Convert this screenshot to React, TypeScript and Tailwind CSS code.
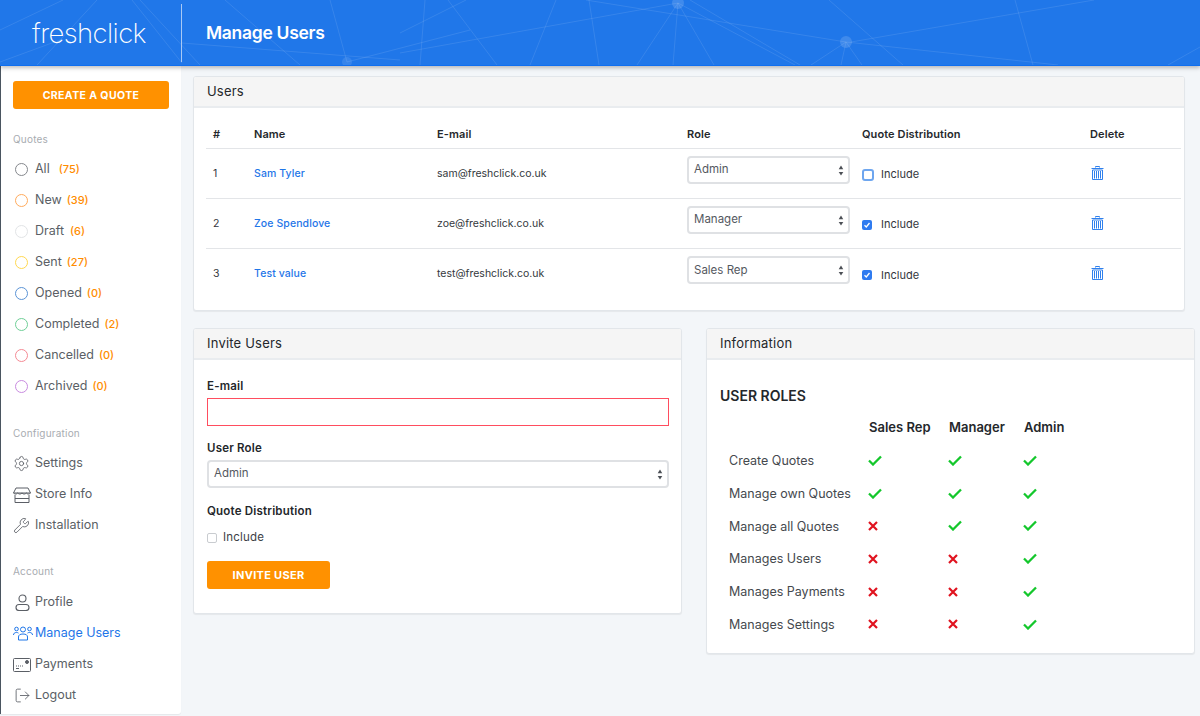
import React from "react";
import { Settings, Wrench, LogOut } from "lucide-react";

const quoteRows = [
  { label: "All", count: "(75)", ring: "border-[#85888d]", gap: "ml-[9px]" },
  { label: "New", count: "(39)", ring: "border-[#ffab5c]", gap: "ml-[5px]" },
  { label: "Draft", count: "(6)", ring: "border-[#e2e4e6]", gap: "ml-[6px]" },
  { label: "Sent", count: "(27)", ring: "border-[#ffd84f]", gap: "ml-[5px]" },
  { label: "Opened", count: "(0)", ring: "border-[#5b94d6]", gap: "ml-[5px]" },
  { label: "Completed", count: "(2)", ring: "border-[#6fcf97]", gap: "ml-[5px]" },
  { label: "Cancelled", count: "(0)", ring: "border-[#f58a94]", gap: "ml-[5px]" },
  { label: "Archived", count: "(0)", ring: "border-[#c98be0]", gap: "ml-[5px]" },
];

const users = [
  { id: 1, name: "Sam Tyler", email: "sam@freshclick.co.uk", role: "Admin", include: false },
  { id: 2, name: "Zoe Spendlove", email: "zoe@freshclick.co.uk", role: "Manager", include: true },
  { id: 3, name: "Test value", email: "test@freshclick.co.uk", role: "Sales Rep", include: true },
];

const permissions: [string, boolean, boolean, boolean][] = [
  ["Create Quotes", true, true, true],
  ["Manage own Quotes", true, true, true],
  ["Manage all Quotes", false, true, true],
  ["Manages Users", false, false, true],
  ["Manages Payments", false, false, true],
  ["Manages Settings", false, false, true],
];

const headerLines = [
  "M0 30L63 0", "M97 0L37 65", "M132 0L182 63", "M140 0L200 65", "M182 43L400 60", "M225 0L300 65",
  "M0 62L60 40", "M330 0L347 62", "M347 62L470 30", "M586 0L846 42L1058 65", "M851 42L1094 0",
  "M400 53L678 3", "M678 3L637 65", "M678 3L673 65", "M678 3L714 65", "M678 3L795 65", "M690 0L800 65",
  "M846 42L811 65", "M846 42L841 65", "M846 42L862 65", "M829 0L903 65", "M1015 0L1033 65",
  "M556 0L530 65", "M589 0L599 65", "M448 0L497 65", "M425 0L420 65", "M466 0L400 33", "M1200 47L1168 65",
];

const HeaderLines = () => (
  <svg className="absolute inset-0 h-full w-full" viewBox="0 0 1200 65" preserveAspectRatio="none">
    {headerLines.map((d) => (
      <path key={d} d={d} fill="none" stroke="#ffffff" strokeOpacity="0.1" strokeWidth="1" />
    ))}
    <circle cx="846" cy="42" r="6" fill="#ffffff" fillOpacity="0.14" />
    <circle cx="678" cy="3" r="6" fill="#ffffff" fillOpacity="0.14" />
    <circle cx="347" cy="62" r="5" fill="#ffffff" fillOpacity="0.1" />
  </svg>
);

const StoreIcon = () => (
  <svg viewBox="0 0 18 16" className="h-[16px] w-[18px]" fill="none" stroke="#5b5f66" strokeWidth="1">
    <path d="M3 1h12l2.500 5H.5z" />
    <path d="M.5 6c1.500 1.400 3 1.400 4.200 0 1.300 1.400 3 1.400 4.300 0 1.300 1.400 3 1.400 4.300 0 1.200 1.400 2.700 1.400 4.200 0" />
    <path d="M2 8v7.500h14V8M2 11.500h14" />
  </svg>
);

const ProfileIcon = () => (
  <svg viewBox="0 0 15 17" className="h-[17px] w-[15px]" fill="none" stroke="#5b5f66" strokeWidth="1.100">
    <circle cx="7.500" cy="4.500" r="3.500" />
    <rect x="1" y="10.500" width="13" height="6" rx="3" />
  </svg>
);

const UsersIcon = () => (
  <svg viewBox="0 0 20 15" className="h-[15px] w-[20px]" fill="none" stroke="#1f76e8" strokeWidth="1">
    <circle cx="10" cy="3.500" r="2.500" />
    <circle cx="3.500" cy="3" r="1.800" />
    <circle cx="16.500" cy="3" r="1.800" />
    <path d="M5.500 14v-3c0-2 1.500-3 4.500-3s4.500 1 4.500 3v3z" />
    <path d="M.5 9c0-1.500 1-2.500 3-2.500 1 0 1.500.2 2 .6M19.500 9c0-1.500-1-2.500-3-2.500-1 0-1.500.2-2 .6" />
  </svg>
);

const PaymentsIcon = () => (
  <svg viewBox="0 0 18 14" className="h-[14px] w-[18px]" fill="none" stroke="#5b5f66" strokeWidth="1">
    <rect x="0.500" y="0.500" width="17" height="13" rx="1" />
    <path d="M3 8h1M5 8h1M7 8h1M9 8h1M3 10.500h3" strokeWidth="1.200" />
    <circle cx="14" cy="4" r="1.500" fill="#5b5f66" />
  </svg>
);

const Arrows = () => (
  <svg viewBox="0 0 6 12" className="h-[11px] w-[6px]" fill="#4b4f55">
    <path d="M3 0.500L5.500 4.500H0.500z" />
    <path d="M3 11.500L0.500 7.500H5.500z" />
  </svg>
);

const Trash = () => (
  <svg viewBox="0 0 13 14" className="h-[14px] w-[13px]" fill="none" stroke="#2f80ed" strokeWidth="1">
    <path d="M4.500 1.500V.5h4v1M.5 2.500h12M1.500 2.500h10" />
    <path d="M1.500 4h10v9.500h-10z" />
    <path d="M3.500 5v7.500M5.500 5v7.500M7.500 5v7.500M9.500 5v7.500" />
  </svg>
);

const Check = () => (
  <svg viewBox="0 0 14 11" className="-ml-[1px] h-[11px] w-[14px]" fill="none" stroke="#14c72c" strokeWidth="2.300">
    <path d="M1 5.500L5 9.500L13 1.500" />
  </svg>
);

const Cross = () => (
  <svg viewBox="0 0 10 10" className="-ml-[1px] h-[10px] w-[10px]" fill="none" stroke="#e0131f" strokeWidth="2.200">
    <path d="M1 1L9 9M9 1L1 9" />
  </svg>
);

const SectionLabel = ({ children }: { children: React.ReactNode }) => (
  <div className="h-[16px] pl-[12px] text-[10px] leading-[16px] tracking-[0.2px] text-[#a8acb1]">{children}</div>
);

const NavRow = ({ icon, label, active }: { icon: React.ReactNode; label: string; active?: boolean }) => (
  <div className={`flex h-[31px] items-center pl-[12px] text-[12.500px] ${active ? "text-[#1f76e8]" : "text-[#5b5f66]"}`}>
    <span className="flex w-[22px] shrink-0 items-center justify-start">{icon}</span>
    {label}
  </div>
);

const Card = ({ title, className, children }: { title: string; className: string; children: React.ReactNode }) => (
  <div className={`overflow-hidden rounded-[3px] border border-[#e2e6ea] bg-white shadow-[0_1px_1px_rgba(0,0,0,0.06)] ${className}`}>
    <div className="flex h-[31px] items-center border-b-2 border-[#e9ecef] bg-[#f5f5f5] px-[13px] pt-[1px] text-[13px] tracking-[0.2px] text-[#24272b]">
      {title}
    </div>
    {children}
  </div>
);

const SelectBox = ({ value, className }: { value: string; className: string }) => (
  <div className={`flex h-[28px] items-center justify-between rounded-[4px] border-2 border-[#dfe1e4] bg-white pl-[5px] pr-[4px] text-[11.500px] text-[#55595f] ${className}`}>
    {value}
    <Arrows />
  </div>
);

const CheckBox = ({ on, first }: { on: boolean; first?: boolean }) => {
  if (first) return <span className="h-[12px] w-[12px] rounded-[3px] border-2 border-[#6ea6ef] bg-white" />;
  if (!on) return <span className="h-[10px] w-[10px] rounded-[2px] border border-[#c9ccd0] bg-white" />;
  return (
    <span className="flex h-[10px] w-[10px] items-center justify-center rounded-[2px] bg-[#2f7bf0]">
      <svg viewBox="0 0 8 8" className="h-[8px] w-[8px]" fill="none" stroke="#ffffff" strokeWidth="1.300">
        <path d="M1.500 4.200L3.300 6L6.500 2" />
      </svg>
    </span>
  );
};

export default function App() {
  return (
    <div className="flex h-[716px] w-[1200px] flex-col overflow-hidden bg-[#f3f6f9] font-['Inter',sans-serif]">
      <header className="relative z-10 flex h-[66px] shrink-0 items-center overflow-hidden border-b border-[#0f6ff0] bg-[#2077e9] shadow-[0_2px_4px_rgba(0,0,0,0.25)]">
        <HeaderLines />
        <div className="relative w-[181px] pl-[32px] pt-[2px] text-[27.500px] font-extralight tracking-[-0.6px] text-white">freshclick</div>
        <div className="relative h-[58px] w-px bg-[#a8c9f5]" />
        <div className="relative ml-[24px] pt-[1px] text-[17.500px] font-semibold tracking-[-0.3px] text-white">Manage Users</div>
      </header>

      <div className="flex min-h-0 flex-1">
        <aside className="mb-[2px] w-[181px] shrink-0 rounded-br-[3px] border-l border-[#4a5560] bg-white shadow-[0_1px_1px_rgba(0,0,0,0.06)]">
          <div className="px-[12px] pt-[15px]">
            <div className="flex h-[28px] w-[156px] items-center justify-center rounded-[3px] bg-[#ff9100] pt-[1px] text-[10.500px] font-bold tracking-[0.4px] text-white">
              CREATE A QUOTE
            </div>
          </div>
          <div className="mt-[22px]" />
          <SectionLabel>Quotes</SectionLabel>
          <div className="mt-[7px]">
            {quoteRows.map((q) => (
              <div key={q.label} className="flex h-[31px] items-center pl-[14px] text-[12.500px] text-[#5b5f66]">
                <span className={`mr-[7px] h-[13px] w-[13px] rounded-full border-[1.500px] ${q.ring}`} />
                {q.label}
                <span className={`${q.gap} text-[11px] font-medium text-[#ff8c00]`}>{q.count}</span>
              </div>
            ))}
          </div>
          <div className="mt-[23px]" />
          <SectionLabel>Configuration</SectionLabel>
          <div className="mt-[7px]">
            <NavRow icon={<Settings size={17} strokeWidth={1.2} color="#5b5f66" />} label="Settings" />
            <NavRow icon={<StoreIcon />} label="Store Info" />
            <NavRow icon={<Wrench size={17} strokeWidth={1.2} color="#5b5f66" />} label="Installation" />
          </div>
          <div className="mt-[22px]" />
          <SectionLabel>Account</SectionLabel>
          <div className="mt-[8px]">
            <NavRow icon={<span className="ml-[2px] flex"><ProfileIcon /></span>} label="Profile" />
            <NavRow icon={<UsersIcon />} label="Manage Users" active />
            <NavRow icon={<PaymentsIcon />} label="Payments" />
            <NavRow icon={<LogOut size={17} strokeWidth={1.2} color="#5b5f66" className="ml-[1px]" />} label="Logout" />
          </div>
        </aside>

        <main className="w-[1007px] pl-[12px] pr-[3px] pt-[10px]">
          <Card title="Users" className="h-[235px]">
            <div className="px-[12px] pt-[17px]">
              <table className="w-[975px] table-fixed border-collapse text-[10.500px] text-[#33373c]">
                <thead>
                  <tr className="h-[23px] border-b border-[#e3e5e8] text-left text-[11px] font-semibold tracking-[0.1px] text-[#25282c]">
                    <th className="w-[41px] pb-[4px] pl-[7px] font-semibold">#</th>
                    <th className="w-[183px] pb-[4px] pl-[7px] font-semibold">Name</th>
                    <th className="w-[250px] pb-[4px] pl-[7px] font-semibold">E-mail</th>
                    <th className="w-[175px] pb-[4px] pl-[7px] font-semibold">Role</th>
                    <th className="w-[228px] pb-[4px] pl-[7px] font-semibold">Quote Distribution</th>
                    <th className="pb-[4px] pl-[7px] font-semibold">Delete</th>
                  </tr>
                </thead>
                <tbody>
                  {users.map((u) => (
                    <tr key={u.id} className="h-[50px] border-b border-[#e3e5e8] last:border-b-0">
                      <td className="pl-[7px] pt-[2px]">{u.id}</td>
                      <td className="pl-[7px] pt-[2px] font-medium tracking-[0.1px] text-[#1f76e8]">{u.name}</td>
                      <td className="pl-[7px] pt-[2px]">{u.email}</td>
                      <td className="pl-[7px]">
                        <div className="pb-[6px]">
                          <SelectBox value={u.role} className="w-[163px]" />
                        </div>
                      </td>
                      <td className="pl-[7px] pt-[3px] text-[11px]">
                        <div className="flex items-center">
                          <span className="flex w-[19px] items-center">
                            <CheckBox on={u.include} first={u.id === 1} />
                          </span>
                          Include
                        </div>
                      </td>
                      <td className="pl-[7px]">
                        <div className="pl-[1px]">
                          <Trash />
                        </div>
                      </td>
                    </tr>
                  ))}
                </tbody>
              </table>
            </div>
          </Card>

          <div className="mt-[17px] grid grid-cols-[489px_489px] items-start gap-[24px]">
            <Card title="Invite Users" className="h-[286px]">
              <div className="px-[13px] pt-[19px] text-[#24272b]">
                <div className="text-[11.500px] font-semibold leading-[14px] tracking-[0.2px]">E-mail</div>
                <input className="mt-[5px] block h-[28px] w-[462px] border border-[#ff4d5f] bg-white outline-none" />
                <div className="mt-[15px] text-[11.500px] font-semibold leading-[14px] tracking-[0.2px]">User Role</div>
                <SelectBox value="Admin" className="mt-[5px] w-[462px]" />
                <div className="mt-[16px] text-[11.500px] font-semibold leading-[14px] tracking-[0.2px]">Quote Distribution</div>
                <div className="mt-[11px] flex items-center text-[11.500px] tracking-[0.2px] text-[#3d4146]">
                  <span className="flex w-[16px] items-center">
                    <CheckBox on={false} />
                  </span>
                  Include
                </div>
                <div className="mt-[15px] flex h-[28px] w-[123px] items-center justify-center rounded-[3px] bg-[#ff9100] text-[11px] font-bold tracking-[0.3px] text-white">
                  INVITE USER
                </div>
              </div>
            </Card>

            <Card title="Information" className="h-[326px]">
              <div className="px-[13px] pt-[27px]">
                <div className="text-[14px] font-semibold leading-[17px] text-[#24272b]">USER ROLES</div>
                <div className="mt-[15px] grid grid-cols-[140px_80px_75px_1fr] pl-[9px] text-[13px] font-semibold leading-[17px] text-[#24272b]">
                  <div />
                  <div>Sales Rep</div>
                  <div>Manager</div>
                  <div>Admin</div>
                </div>
                <div className="mt-[8px] pl-[9px]">
                  {permissions.map(([label, a, b, c]) => (
                    <div key={label} className="grid h-[32.800px] grid-cols-[140px_80px_75px_1fr] items-center text-[12.500px] text-[#45494e]">
                      <div className="pt-[2px]">{label}</div>
                      <div>{a ? <Check /> : <Cross />}</div>
                      <div>{b ? <Check /> : <Cross />}</div>
                      <div>{c ? <Check /> : <Cross />}</div>
                    </div>
                  ))}
                </div>
              </div>
            </Card>
          </div>
        </main>
      </div>
    </div>
  );
}
